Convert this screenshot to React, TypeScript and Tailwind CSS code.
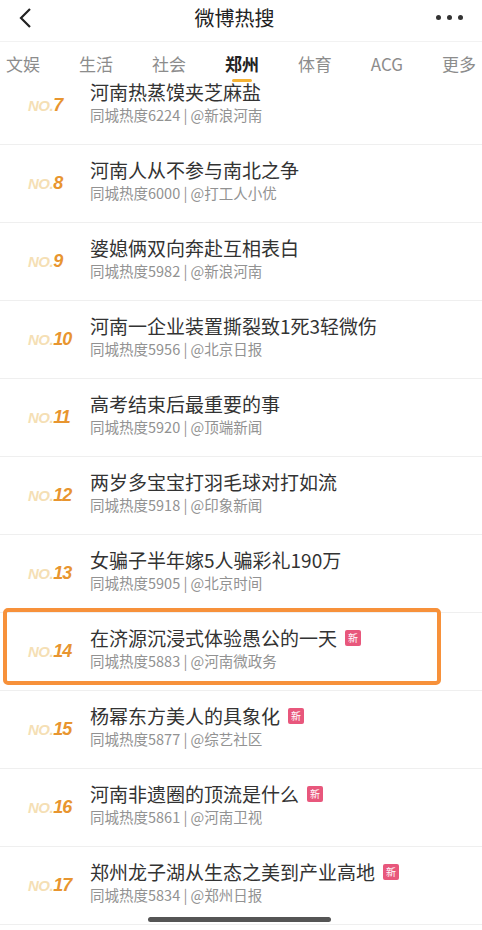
const font = { fontFamily: '"Noto Sans CJK SC", "Noto Sans", sans-serif' };

type Item = { no: number; title: string; heat: number; src: string; isNew?: boolean; boxed?: boolean };

const items: Item[] = [
  { no: 7, title: "河南热蒸馍夹芝麻盐", heat: 6224, src: "新浪河南" },
  { no: 8, title: "河南人从不参与南北之争", heat: 6000, src: "打工人小优" },
  { no: 9, title: "婆媳俩双向奔赴互相表白", heat: 5982, src: "新浪河南" },
  { no: 10, title: "河南一企业装置撕裂致1死3轻微伤", heat: 5956, src: "北京日报" },
  { no: 11, title: "高考结束后最重要的事", heat: 5920, src: "顶端新闻" },
  { no: 12, title: "两岁多宝宝打羽毛球对打如流", heat: 5918, src: "印象新闻" },
  { no: 13, title: "女骗子半年嫁5人骗彩礼190万", heat: 5905, src: "北京时间" },
  { no: 14, title: "在济源沉浸式体验愚公的一天", heat: 5883, src: "河南微政务", isNew: true, boxed: true },
  { no: 15, title: "杨幂东方美人的具象化", heat: 5877, src: "综艺社区", isNew: true },
  { no: 16, title: "河南非遗圈的顶流是什么", heat: 5861, src: "河南卫视", isNew: true },
  { no: 17, title: "郑州龙子湖从生态之美到产业高地", heat: 5834, src: "郑州日报", isNew: true },
];

const tabs = ["文娱", "生活", "社会", "郑州", "体育", "ACG", "更多"];

function Row({ item }: { item: Item }) {
  return (
    <div className="relative flex h-[78px] items-center border-b border-[#efefef]">
      <div className="flex w-[90px] items-baseline pl-[28px] italic" style={{ fontFamily: '"Liberation Sans", sans-serif' }}>
        <span className="text-[15px] font-bold tracking-[-0.5px] text-[#f5dfb5]">NO.</span>
        <span className="text-[18px] font-bold tracking-[-1px] text-[#e8952f]">{item.no}</span>
      </div>
      <div className="mb-[6px] flex flex-col">
        <div className="flex items-center gap-[8px] text-[19px] leading-[24px] text-[#333]">
          <span>{item.title}</span>
          {item.isNew ? (
            <span className="flex h-[16px] w-[16px] items-center justify-center rounded-[2px] bg-[#e8577c] text-[10px] leading-none text-white">新</span>
          ) : null}
        </div>
        <div className="mt-[1px] text-[14.5px] leading-[20px] text-[#929292]">
          同城热度{item.heat} | @{item.src}
        </div>
      </div>
      {item.boxed ? (
        <div className="pointer-events-none absolute left-[3px] top-[-5px] h-[77px] w-[438px] rounded-[5px] border-[4px] border-[#f7913a]" />
      ) : null}
    </div>
  );
}

export default function App() {
  return (
    <div className="relative h-[930px] w-[482px] overflow-hidden bg-white" style={font}>
      <div className="flex h-[42px] items-center justify-between border-b border-[#f2f2f2] px-[16px] pb-[6px]">
        <svg width="16" height="24" viewBox="0 0 16 24" className="ml-[1px]">
          <path d="M13 3 L4 12 L13 21" fill="none" stroke="#222" strokeWidth="2.2" />
        </svg>
        <div className="text-[20px] text-[#222]">微博热搜</div>
        <div className="flex gap-[6px] pr-[3px]">
          <span className="h-[5px] w-[5px] rounded-full bg-[#333]" />
          <span className="h-[5px] w-[5px] rounded-full bg-[#333]" />
          <span className="h-[5px] w-[5px] rounded-full bg-[#333]" />
        </div>
      </div>
      <div className="flex h-[46px] items-center justify-between px-[6px] pb-[3px]">
        {tabs.map((t) => (
          <div key={t} className="relative flex flex-col items-center">
            <span className={t === "郑州" ? "text-[17px] font-bold text-[#222]" : "text-[17px] text-[#8c8c8c]"}>{t}</span>
            {t === "郑州" ? <span className="absolute top-[28px] h-[3px] w-[20px] rounded-full bg-[#f5b335]" /> : null}
          </div>
        ))}
      </div>
      <div className="mt-[-21px]">
        {items.map((it) => (
          <Row key={it.no} item={it} />
        ))}
      </div>
      <div className="absolute bottom-[8px] left-[148px] h-[5px] w-[183px] rounded-full bg-[#555]" />
    </div>
  );
}
